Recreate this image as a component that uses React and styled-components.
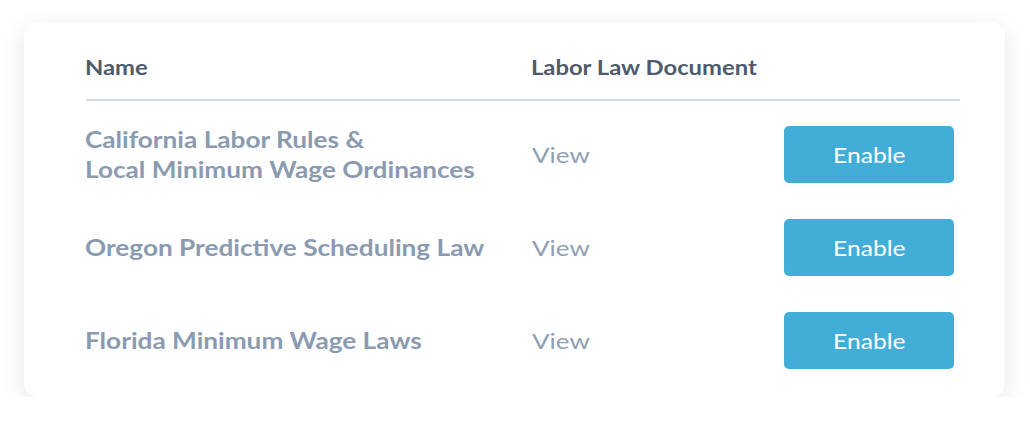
import React from "react";
import styled, { createGlobalStyle } from "styled-components";

const laws = [
  { name: ["California Labor Rules &", "Local Minimum Wage Ordinances"] },
  { name: ["Oregon Predictive Scheduling Law"] },
  { name: ["Florida Minimum Wage Laws"] },
];

export default function App() {
  return (
    <>
      <GlobalStyle />
      <Card>
        <HeaderRow>
          <HeadCell>Name</HeadCell>
          <HeadCell>Labor Law Document</HeadCell>
        </HeaderRow>
        <Body>
          {laws.map((law, i) => (
            <Row key={i}>
              <LawName>
                {law.name.map((line, j) => (
                  <NameLine key={j}>{line}</NameLine>
                ))}
              </LawName>
              <ViewLink href="#">View</ViewLink>
              <EnableButton>
                <ButtonLabel>Enable</ButtonLabel>
              </EnableButton>
            </Row>
          ))}
        </Body>
      </Card>
    </>
  );
}

const GlobalStyle = createGlobalStyle`
  body {
    margin: 0;
    background: #ffffff;
    font-family: Lato, "Open Sans", Arial, sans-serif;
  }
`;

const Card = styled.div`
  width: 981px;
  margin: 22px 0 0 24px;
  box-sizing: border-box;
  padding: 33px 45px 10px 62px;
  background: #fff;
  border-radius: 14px;
  box-shadow: 0 6px 24px rgba(0, 0, 0, 0.1);
`;

const HeaderRow = styled.div`
  display: grid;
  grid-template-columns: 446px 1fr;
  padding-bottom: 20px;
  border-bottom: 2px solid #d3dbe5;
`;

/* the type in this design is drawn wider than stock Lato */
const HeadCell = styled.div`
  font-size: 20px;
  line-height: 24px;
  font-weight: 700;
  color: #4d5b6c;
  margin-left: -1px;
  transform: scaleX(1.19);
  transform-origin: left center;
`;

const Body = styled.div`
  padding-top: 7px;
`;

const Row = styled.div`
  display: grid;
  grid-template-columns: 446px 252px 170px 1fr;
  align-items: center;
  height: 93px;
`;

const LawName = styled.div`
  display: flex;
  flex-direction: column;
  font-size: 22px;
  line-height: 30px;
  font-weight: 700;
  color: #8a9bb0;
  margin-left: -1px;
`;

const NameLine = styled.span`
  display: block;
  white-space: nowrap;
  transform: scaleX(1.19);
  transform-origin: left center;
`;

const ViewLink = styled.a`
  font-size: 22px;
  line-height: 30px;
  color: #8fa0b4;
  text-decoration: none;
  transform: scaleX(1.18);
  transform-origin: left center;
  justify-self: start;
`;

const EnableButton = styled.button`
  height: 57px;
  border: none;
  border-radius: 5px;
  background: #42aed8;
  color: #fff;
  font-family: Lato, "Open Sans", Arial, sans-serif;
  font-size: 22px;
  cursor: pointer;
`;

const ButtonLabel = styled.span`
  display: inline-block;
  transform: scaleX(1.12);
`;
